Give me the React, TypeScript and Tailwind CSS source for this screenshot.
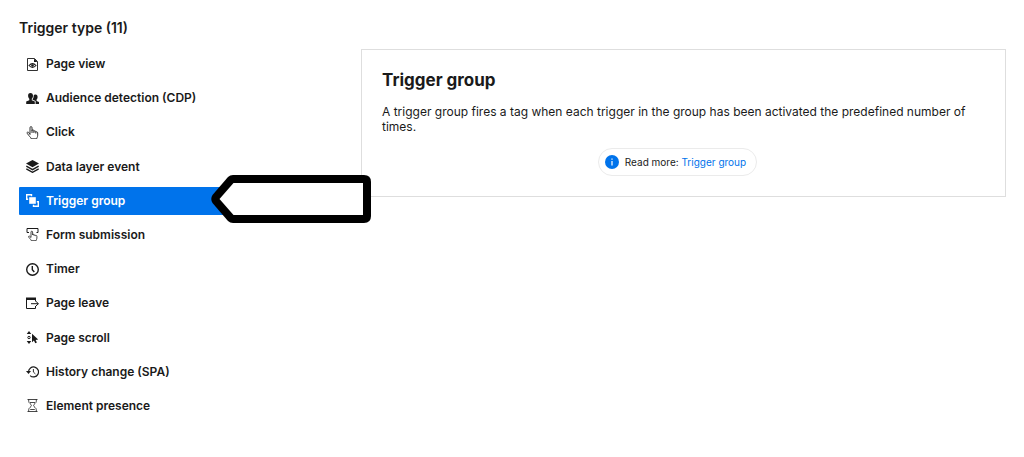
import { ReactNode, useState } from "react";
import clsx from "clsx";

type Trigger = { label: string; icon: ReactNode };

const triggers: Trigger[] = [
  {
    label: "Page view",
    icon: (
      <>
        <path d="M1.500 .5H8.500L11.500 3.500V12.500H1.500z" fill="none" stroke="currentColor" strokeWidth=".9" />
        <path d="M8 .5V4h3.500z" fill="currentColor" />
        <path d="M3 7.500Q6.500 3.700 10 7.500Q6.500 11.300 3 7.500z" fill="none" stroke="currentColor" strokeWidth="1.100" />
        <circle cx="6.500" cy="7.500" r="1.300" fill="currentColor" />
      </>
    ),
  },
  {
    label: "Audience detection (CDP)",
    icon: (
      <path
        d="M4.500 1C2.700 1 2 2.200 2.100 3.700c0 1.400.6 2.400 1.200 3.100v1.500L.2 9.600V12h8.600V9.600L5.800 8.300V6.800C6.500 6 7 5 7 3.700 7 2.200 6.200 1 4.500 1zM9.600 2.400c-1 0-1.700.5-2 1.300.2 1.500-.3 2.700-1 3.600v.5l3 1.300V12H13v-1.900l-2.400-1V7.600c.7-.7 1-1.600 1-2.700 0-1.500-.6-2.500-2-2.500z"
        fill="currentColor"
      />
    ),
  },
  {
    label: "Click",
    icon: (
      <path
        d="M4 8.500V1.700c0-1.500 2-1.500 2 0v3.500V4.500c0-1 1.900-1 1.900.2v.8c.2-1 1.900-.8 1.900.3v.5c.3-.9 1.900-.6 1.900.6v2.300c0 2-1 2.600-1 3.600H5.200c0-1-1.300-1.800-2.400-3.300L1.200 7.300c-.6-1 .7-1.700 1.500-.8zM6 5.200V7M7.900 5.500V7M9.800 6.300V7.500"
        fill="none"
        stroke="currentColor"
        strokeWidth=".9"
        strokeLinejoin="round"
      />
    ),
  },
  {
    label: "Data layer event",
    icon: (
      <>
        <path d="M6.500 0L13 3.600 6.500 7.200 0 3.600z" fill="currentColor" />
        <path d="M.3 6.200l6.200 3.400 6.200-3.400M.3 8.900l6.200 3.400 6.200-3.400" fill="none" stroke="currentColor" strokeWidth="1.400" />
      </>
    ),
  },
  {
    label: "Trigger group",
    icon: (
      <>
        <path d="M2.200 5.300H.7V.7h4.800v1.500M10.800 7.700h1.500v4.600H7.500v-1.500" fill="none" stroke="currentColor" strokeWidth="1.400" />
        <path d="M3.200 3.200h6.600v6.600H3.200z" fill="currentColor" />
      </>
    ),
  },
  {
    label: "Form submission",
    icon: (
      <>
        <path d="M3 4.500H1v-4h11v4h-1.500" fill="none" stroke="currentColor" />
        <path
          d="M5 9.500V4c0-1.100 1.600-1.100 1.600 0v3c0-1 1.500-.9 1.500 0v.5c.2-.9 1.500-.7 1.500.2.3-.6 1.300-.3 1.300.5v2c0 1.300-.8 1.500-.8 2.500H5.300c0-1-1.200-1.500-2.600-3.600-.5-.8.4-1.300 1-.8z"
          fill="none"
          stroke="currentColor"
          strokeWidth=".8"
        />
      </>
    ),
  },
  {
    label: "Timer",
    icon: (
      <>
        <circle cx="6.500" cy="6.500" r="5.800" fill="none" stroke="currentColor" strokeWidth="1.400" />
        <path d="M6.300 3v3.700l2 2.300" fill="none" stroke="currentColor" strokeWidth="1.400" />
      </>
    ),
  },
  {
    label: "Page leave",
    icon: (
      <>
        <path d="M0 .5h10V3H0z" fill="currentColor" />
        <path d="M9.500 2v2.500M9.500 9v2.500H.5V2" fill="none" stroke="currentColor" />
        <path d="M5 6.700h7.300M10 4.400l2.400 2.300L10 9" fill="none" stroke="currentColor" />
      </>
    ),
  },
  {
    label: "Page scroll",
    icon: (
      <>
        <path d="M3 0l2.300 3H.7zM3 13l2.300-3H.7z" fill="currentColor" />
        <circle cx="3" cy="6.500" r="1.200" fill="none" stroke="currentColor" />
        <path d="M6 2.800v8.400l1.900-1.700 1.400 2.700 1.600-.7-1.300-2.600 2.600-.3z" fill="currentColor" />
      </>
    ),
  },
  {
    label: "History change (SPA)",
    icon: (
      <>
        <path d="M2.500 6.800a5 5 0 1 1 1.600 3.800" fill="none" stroke="currentColor" strokeWidth="1.200" />
        <path d="M0 6l2.500 3L5 6z" fill="currentColor" />
        <path d="M7.400 4v3.100l2 1.800" fill="none" stroke="currentColor" strokeWidth=".9" />
      </>
    ),
  },
  {
    label: "Element presence",
    icon: (
      <>
        <path d="M1.500.5h10M1.500 12.500h10M2.700.5v1.800c0 2 2.700 2.700 2.700 4.200s-2.700 2.200-2.700 4.200v1.800M10.300.5v1.800c0 2-2.700 2.700-2.700 4.200s2.700 2.200 2.700 4.200v1.800" fill="none" stroke="currentColor" strokeWidth=".8" />
        <path d="M4 3.500h5M4.200 10.500h4.600" stroke="currentColor" strokeWidth=".8" />
      </>
    ),
  },
];

function TriggerIcon({ children }: { children: ReactNode }) {
  return (
    <svg viewBox="0 0 13 13" className="size-[13px] shrink-0" aria-hidden="true">
      {children}
    </svg>
  );
}

function Pointer() {
  return (
    <svg viewBox="0 0 160 48" className="pointer-events-none absolute -top-3 left-48 h-12 w-40" aria-hidden="true">
      <path d="M22 0H153Q160 0 160 7V41Q160 48 153 48H22Q19 48 17 46L1.500 28Q-1 24 1.500 20L17 2Q19 0 22 0z" fill="black" />
      <path d="M22.500 8H152V40H22.500L8.500 24z" fill="white" />
    </svg>
  );
}

export default function App() {
  const [selected, setSelected] = useState("Trigger group");

  return (
    <main className="flex items-start bg-white pt-[18px] pr-[18px] pb-9 pl-[19px] font-['Inter',sans-serif] text-[#1a1a1a]">
      <section className="relative z-10 w-[35%] max-w-[342px] shrink-0 pr-5">
        <h2 className="text-sm leading-5 font-semibold">Trigger type (11)</h2>
        <ul className="mt-3 flex min-h-[370px] flex-col justify-between">
          {triggers.map(({ label, icon }) => (
            <li key={label} className="relative">
              <button
                type="button"
                aria-pressed={selected === label}
                onClick={() => setSelected(label)}
                className={clsx(
                  "flex h-7 w-full items-center gap-[7px] rounded-[1px] px-[7px] text-left text-xs font-semibold",
                  selected === label && "bg-[#0073eb] text-white",
                )}
              >
                <TriggerIcon>{icon}</TriggerIcon>
                {label}
              </button>
              {label === "Trigger group" && <Pointer />}
            </li>
          ))}
        </ul>
      </section>

      <article className="mt-[31px] min-w-0 flex-1 border border-[#dedede] pt-5 pr-8 pb-5 pl-5">
        <h1 className="text-[17px] leading-5 font-bold">Trigger group</h1>
        <p className="mt-3.5 text-xs leading-[15px]">
          A trigger group fires a tag when each trigger in the group has been activated the predefined number of times.
        </p>
        <div className="mt-3.5 flex justify-center">
          <div className="flex h-7 items-center gap-1.5 rounded-full border border-[#ebebeb] pr-2.5 pl-1.5 text-[10px]">
            <svg viewBox="0 0 14 14" className="size-3.5" aria-hidden="true">
              <circle cx="7" cy="7" r="7" fill="#0073eb" />
              <path d="M7 3.500v1.300M7 6v4.500" stroke="white" strokeWidth="1.200" />
            </svg>
            <span>
              Read more: <a href="#trigger-group" className="text-[#0073eb]">Trigger group</a>
            </span>
          </div>
        </div>
      </article>
    </main>
  );
}
